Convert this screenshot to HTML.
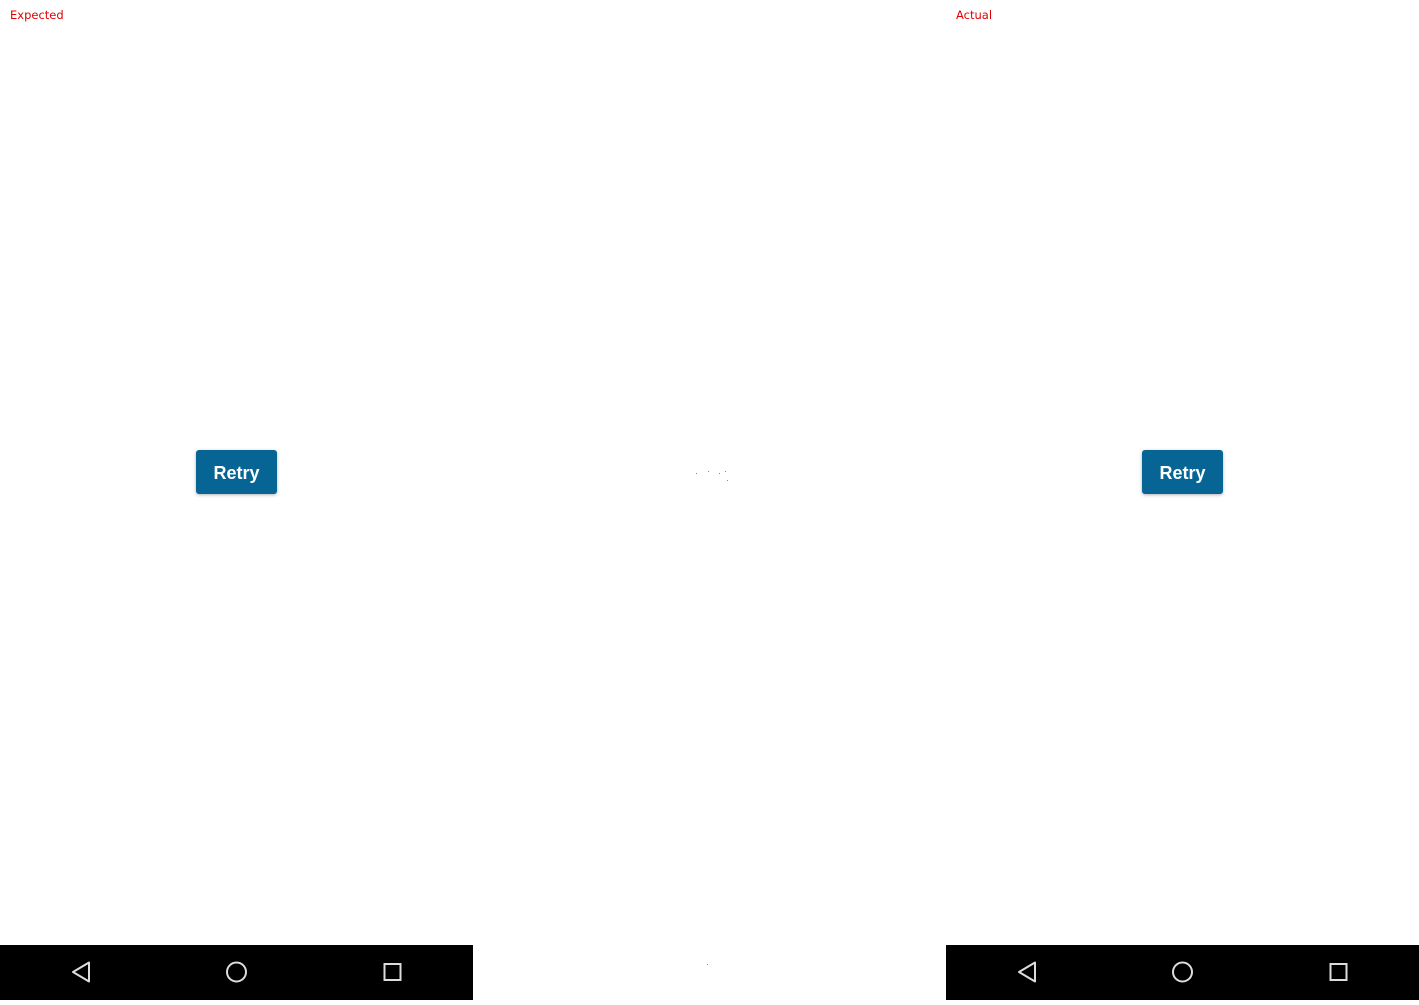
<!DOCTYPE html>
<html><head><style>
body{margin:0;width:1419px;height:1000px;position:relative;background:#fff;overflow:hidden;font-family:"Liberation Sans","DejaVu Sans",sans-serif}
.lbl{position:absolute;top:8px;font-size:11.5px;color:#e00000;font-family:"DejaVu Sans",sans-serif}
.btn{position:absolute;top:450px;width:81px;height:44px;background:#076596;border-radius:3px;color:#fff;font-weight:bold;font-size:18px;line-height:47px;text-align:center;box-shadow:0 1px 3px rgba(0,0,0,.3)}
.nav{position:absolute;top:945px;width:473px;height:55px;background:#000}
.dot{position:absolute;width:1px;height:1px;background:#888}
</style></head><body>
<div class="lbl" style="left:10px">Expected</div>
<div class="lbl" style="left:956px">Actual</div>
<div class="btn" style="left:196px">Retry</div>
<div class="btn" style="left:1142px">Retry</div>
<div class="nav" style="left:0"><svg width="473" height="55"><g fill="none" stroke="#ddd" stroke-width="2"><path d="M89 17.5V36.5L73 27Z" stroke-linejoin="round"/><circle cx="236.5" cy="27" r="9.5"/><rect x="384.5" y="19" width="16" height="16"/></g></svg></div>
<div class="nav" style="left:946px"><svg width="473" height="55"><g fill="none" stroke="#ddd" stroke-width="2"><path d="M89 17.5V36.5L73 27Z" stroke-linejoin="round"/><circle cx="236.5" cy="27" r="9.5"/><rect x="384.5" y="19" width="16" height="16"/></g></svg></div>
<div class="dot" style="left:696px;top:473px"></div>
<div class="dot" style="left:708px;top:471px"></div>
<div class="dot" style="left:719px;top:473px"></div>
<div class="dot" style="left:725px;top:471px"></div>
<div class="dot" style="left:727px;top:480px"></div>
<div class="dot" style="left:707px;top:964px"></div>
</body></html>
